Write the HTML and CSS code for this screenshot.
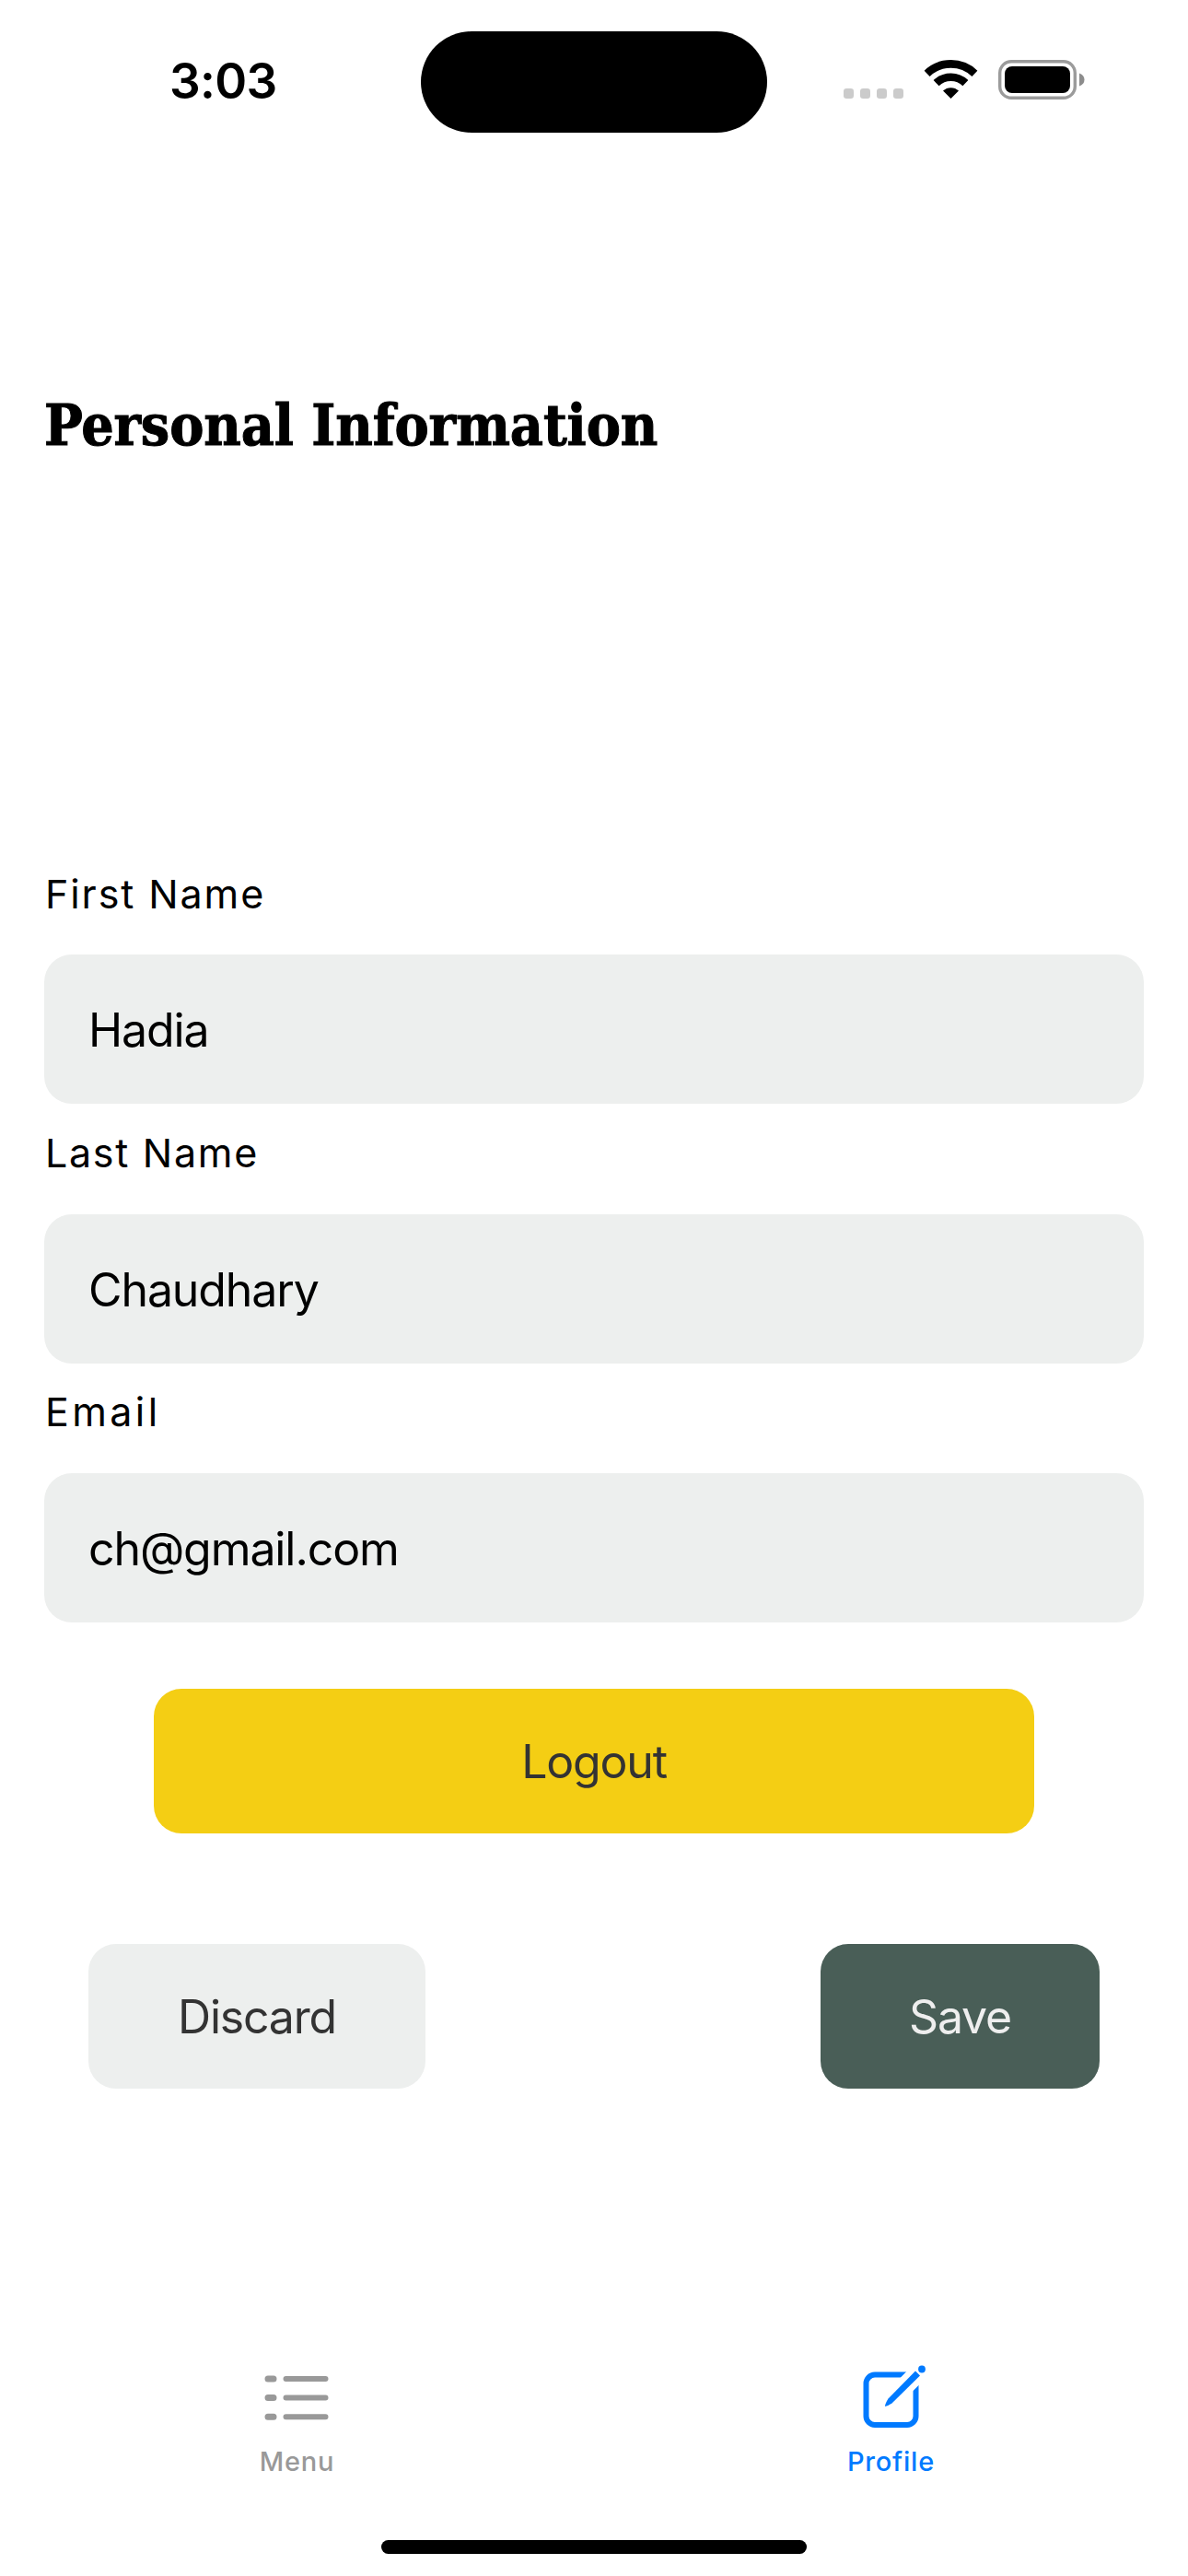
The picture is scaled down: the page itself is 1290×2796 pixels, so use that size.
FILE: index.html
```html
<!DOCTYPE html>
<html lang="en">
<head>
<meta charset="utf-8">
<title>Personal Information</title>
<link rel="stylesheet" href="styles.css">
</head>
<body>
<header class="status">
  <div class="time">3:03</div>
  <div class="island"></div>
  <svg class="status-icons" viewBox="0 0 264 44" width="264" height="44">
    <g fill="#cbcbcb"><rect x="0" y="31" width="11" height="11" rx="3.2"/><rect x="18" y="31" width="11" height="11" rx="3.2"/><rect x="36" y="31" width="11" height="11" rx="3.2"/><rect x="54" y="31" width="11" height="11" rx="3.2"/></g>
    <g fill="none" stroke="#000" stroke-width="8.6">
      <path d="M90.6 14.8A37.5 37.5 0 0 1 142.4 14.8"/>
      <path d="M100.6 25.2A23 23 0 0 1 132.4 25.2"/>
    </g>
    <path d="M108 33.6A12.5 12.5 0 0 1 125 33.6L116.500 42Z"/>
    <rect x="169.700" y="1.700" width="81.600" height="39.600" rx="12.500" fill="none" stroke="#9b9b9b" stroke-width="3.400"/>
    <rect x="175" y="7" width="71" height="29" rx="8"/>
    <path d="M256 14.500Q261.500 16.500 261.500 21.500T256 28.500Z" fill="#8c8c8c"/>
  </svg>
</header>
<main class="page">
  <h1 class="title">Personal Information</h1>
  <form class="form">
    <label class="field"><span class="label">First Name</span><input class="input" value="Hadia"></label>
    <label class="field"><span class="label last">Last Name</span><input class="input" value="Chaudhary"></label>
    <label class="field"><span class="label email">Email</span><input class="input" value="ch@gmail.com"></label>
  </form>
  <button class="btn logout">Logout</button>
  <div class="actions">
    <button class="btn discard">Discard</button>
    <button class="btn save">Save</button>
  </div>
</main>
<nav class="tabs">
  <a class="tab">
    <svg class="icon" viewBox="0 0 80 80" width="80" height="80" fill="none" stroke="#999" stroke-linecap="round">
      <path stroke-width="7" d="M8 22H14M8 42.500H14M8 63.300H14"/>
      <path stroke-width="6" d="M27.500 22H70.500M27.500 42.500H70.500M27.500 63.300H70.500"/>
    </svg>
    <span>Menu</span>
  </a>
  <a class="tab active">
    <svg class="icon" viewBox="0 0 80 80" width="80" height="80">
      <path d="M60 17.500H22A9.500 9.500 0 0 0 12.500 27V62.500A9.500 9.500 0 0 0 22 72H57A9.500 9.500 0 0 0 66.500 62.500V24" fill="none" stroke="#007aff" stroke-width="6"/>
      <path d="M66 13.500L71 18.500L40.500 48.500Q36 51.500 33 52Q33 49 36.500 43.500Z" fill="#007aff" stroke="#fff" stroke-width="13" paint-order="stroke"/>
      <circle cx="73" cy="11.500" r="3.900" fill="#007aff"/>
    </svg>
    <span>Profile</span>
  </a>
</nav>
<div class="home"></div>
</body>
</html>
```
FILE: styles.css
```css
* { box-sizing: border-box; }
body {
  margin: 0;
  width: 1290px;
  height: 2796px;
  background: #fff;
  color: #000;
  font-family: Inter, "Liberation Sans", sans-serif;
  display: flex;
  flex-direction: column;
  overflow: hidden;
}
.status {
  height: 178px;
  padding-top: 34px;
  display: grid;
  grid-template-columns: 457px 376px 1fr;
  align-items: start;
}
.time {
  padding: 23px 0 0 184px;
  font-size: 53px;
  line-height: 62px;
  font-weight: 600;
  letter-spacing: -0.7px;
}
.island { height: 110px; border-radius: 55px; background: #000; }
.status-icons { margin: 31px 0 0 83px; }
.page {
  flex: 1;
  padding: 246px 48px 0;
  display: flex;
  flex-direction: column;
}
.title {
  margin: 0;
  font: bold 62px/76px "DejaVu Serif Condensed", "DejaVu Serif", serif;
  font-stretch: condensed;
  letter-spacing: -0.1px;
  -webkit-text-stroke: 1px #000;
  white-space: nowrap;
}
.form { display: flex; flex-direction: column; margin-top: 442px; }
.field { display: flex; flex-direction: column; }
.label {
  height: 94px;
  padding: 3px 0 0 1px;
  font-size: 43px;
  line-height: 50px;
  letter-spacing: 1.9px;
}
.last { padding-top: 2px; letter-spacing: 1.7px; }
.email { padding-top: 2px; letter-spacing: 3.4px; }
.field + .field { margin-top: 26px; }
.field + .field:last-child { margin-top: 25px; }
.input {
  height: 162px;
  padding: 2px 48px 0;
  border: 0;
  border-radius: 30px;
  background: #edefee;
  color: #000;
  font: 400 50px/60px Inter, "Liberation Sans", sans-serif;
  letter-spacing: -1.1px;
}
.btn {
  height: 157px;
  padding: 0;
  border: 0;
  border-radius: 30px;
  font: 400 50px/60px Inter, "Liberation Sans", sans-serif;
  letter-spacing: -1.2px;
  color: #333;
}
.logout { width: 956px; margin: 72px auto 0; background: #f4ce14; }
.actions {
  display: flex;
  justify-content: space-between;
  padding: 0 48px;
  margin-top: 120px;
}
.discard { width: 366px; background: #edefee; }
.save { width: 303px; background: #495e57; color: #eee; }
.tabs {
  height: 197px;
  display: grid;
  grid-template-columns: 1fr 1fr;
}
.tab {
  display: flex;
  flex-direction: column;
  align-items: center;
  font-size: 29px;
  line-height: 36px;
  font-weight: 500;
  letter-spacing: 0.8px;
  color: #999;
}
.tab span { margin-top: 14px; }
.active { color: #007aff; }
.home {
  width: 462px;
  height: 15px;
  margin: 0 auto 24px;
  border-radius: 8px;
  background: #000;
}
```
